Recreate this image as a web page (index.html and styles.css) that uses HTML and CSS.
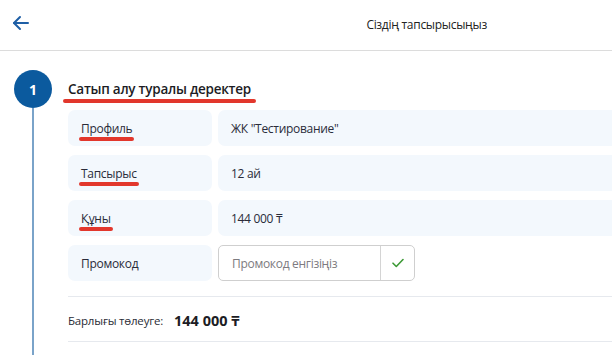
FILE: index.html
```html
<!DOCTYPE html>
<html lang="kk">

<head>
    <meta charset="UTF-8">
    <meta name="viewport" content="width=device-width, initial-scale=1.0">
    <title>Сіздің тапсырысыңыз</title>
    <link rel="stylesheet" href="styles.css">
</head>

<body>
    <div class="header">
        <button type="button" class="back-btn">
            <svg width="17" height="16" viewBox="0 0 17 16" fill="none" stroke="#1f5fa6" stroke-width="2" stroke-linecap="round" stroke-linejoin="round">
                <path d="M16 8H2"></path>
                <path d="M8 2 2 8l6 6"></path>
            </svg>
        </button>
        <div class="header-title">Сіздің тапсырысыңыз</div>
    </div>

    <div class="step">
        <div class="step-marker">
            <div class="step-num">1</div>
            <div class="step-line"></div>
        </div>
        <div class="step-body">
            <h2 class="step-title"><span class="mark">Сатып алу туралы деректер</span></h2>

            <div class="info-rows">
                <div class="info-label"><span class="mark">Профиль</span></div>
                <div class="info-value">ЖК "Тестирование"</div>

                <div class="info-label"><span class="mark">Тапсырыс</span></div>
                <div class="info-value">12 ай</div>

                <div class="info-label"><span class="mark">Құны</span></div>
                <div class="info-value">144 000 ₸</div>

                <div class="info-label">Промокод</div>
                <div class="promo">
                    <input type="text" class="promo-input" placeholder="Промокод енгізіңіз">
                    <button type="button" class="promo-btn">
                        <svg width="12" height="10" viewBox="0 0 12 10" fill="none" stroke="#3d9a36" stroke-width="1.6" stroke-linecap="round" stroke-linejoin="round">
                            <path d="M1 5.2 4.3 8.5 11 1.5"></path>
                        </svg>
                    </button>
                </div>
            </div>

            <div class="total">
                <span class="total-label">Барлығы төлеуге:</span>
                <span class="total-sum">144 000 ₸</span>
            </div>
        </div>
    </div>
</body>

</html>
```

FILE: styles.css
```css
* {
    padding: 0;
    margin: 0;
    box-sizing: border-box;
}

body {
    width: 612px;
    height: 355px;
    overflow: hidden;
    background: #fff;
    font-family: "Open Sans", "Noto Sans", sans-serif;
    color: #2a2c36;
}

.header {
    height: 51px;
    display: flex;
    align-items: center;
    justify-content: space-between;
    padding: 0 125px 2px 12px;
    border-bottom: 1px solid #dcdcdc;
}

.back-btn {
    border: none;
    background: none;
    display: flex;
    margin-top: -3px;
}

.header-title {
    font-size: 12px;
    letter-spacing: -0.3px;
    color: #222;
}

.step {
    display: flex;
    padding-top: 19px;
}

.step-marker {
    width: 68px;
    flex-shrink: 0;
    display: flex;
    flex-direction: column;
    align-items: center;
    padding-right: 2px;
    height: 285px;
}

.step-num {
    width: 38px;
    height: 38px;
    border-radius: 50%;
    background: #0b5a9e;
    color: #fff;
    font-weight: 700;
    font-size: 14px;
    display: flex;
    align-items: center;
    justify-content: center;
}

.step-line {
    width: 2px;
    flex: 1;
    background: #7aa3c9;
}

.step-body {
    flex: 1;
    margin-right: -30px;
}

.step-title {
    font-size: 13.5px;
    letter-spacing: -0.25px;
    font-weight: 600;
    color: #1c1c24;
    line-height: 20px;
    margin-top: 9px;
}

.mark {
    position: relative;
    display: inline-block;
}

.mark::after {
    content: "";
    position: absolute;
    left: -5px;
    right: -5px;
    bottom: -4px;
    height: 4px;
    border-radius: 2px;
    background: #e2372c;
}

.info-rows {
    display: grid;
    grid-template-columns: 144px 1fr;
    grid-auto-rows: 36px;
    column-gap: 6px;
    row-gap: 9px;
    margin-top: 11px;
}

.info-label,
.info-value {
    background: #f3f8fd;
    border-radius: 7px;
    display: flex;
    align-items: center;
    padding-left: 13px;
    font-size: 12px;
    letter-spacing: -0.3px;
    color: #2a2c3a;
}

.info-label .mark::after {
    left: -2px;
    right: -2px;
    bottom: -4px;
    height: 3.5px;
}

.promo {
    width: 197px;
    display: flex;
    border: 1px solid #cfcfcf;
    border-radius: 5px;
}

.promo-input {
    width: 162px;
    border: none;
    border-right: 1px solid #d4d4d4;
    background: none;
    padding-left: 13px;
    font-family: inherit;
    font-size: 12px;
    letter-spacing: -0.3px;
    outline: none;
}

.promo-input::placeholder {
    color: #7d7b80;
}

.promo-btn {
    flex: 1;
    border: none;
    background: none;
    display: flex;
    align-items: center;
    justify-content: center;
}

.total {
    margin-top: 15px;
    height: 46px;
    border-top: 1px solid #e6e9ee;
    border-bottom: 1px solid #e6e9ee;
    display: flex;
    align-items: center;
    gap: 11px;
    padding-top: 2px;
}

.total-label {
    font-size: 11.5px;
    letter-spacing: -0.2px;
    color: #2a2c36;
}

.total-sum {
    font-family: "Noto Sans", "DejaVu Sans", sans-serif;
    font-size: 14.5px;
    font-weight: 700;
    color: #1c1c24;
}
```
